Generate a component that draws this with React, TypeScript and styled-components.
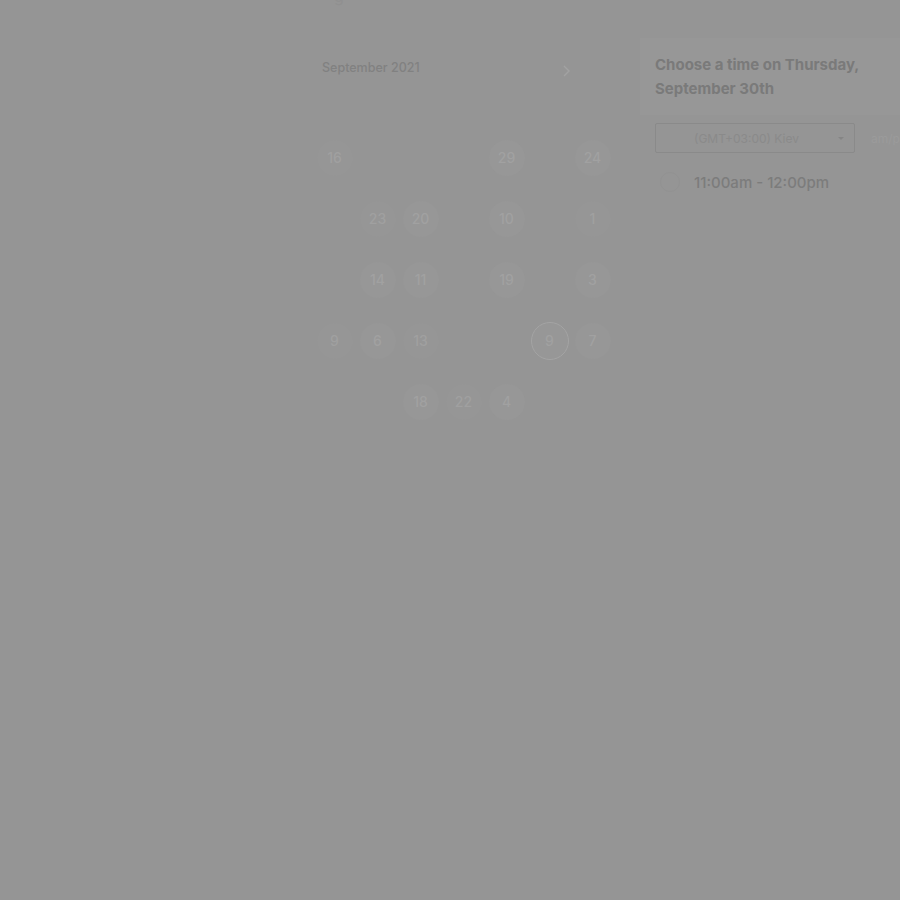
import React from "react";
import styled, { createGlobalStyle } from "styled-components";

const Global = createGlobalStyle`
  html, body { margin: 0; padding: 0; background: #959595; overflow: hidden; }
  body { font-family: Inter, Roboto, "Liberation Sans", Arial, sans-serif; }
`;

const Page = styled.div`
  width: 900px;
  height: 900px;
  overflow: hidden;
  display: flex;
  align-items: flex-start;
  background: #959595;
  position: relative;
`;

const ClippedTitle = styled.div`
  position: absolute;
  top: -14px;
  left: 334px;
  font-size: 16px;
  color: #909090;
`;

const Calendar = styled.section`
  margin-left: 313px;
  width: 301px;
  flex-shrink: 0;
  display: flex;
  flex-direction: column;
`;

const MonthBar = styled.div`
  display: flex;
  align-items: center;
  justify-content: space-between;
  height: 20px;
  margin-top: 57px;
  padding-left: 9px;
  padding-right: 42px;
`;

const MonthLabel = styled.span`
  font-size: 12.5px;
  font-weight: 500;
  color: #818181;
`;

const Chevron = styled.svg`
  width: 10px;
  height: 12px;
  margin-top: 8px;
`;

const Grid = styled.div`
  margin-top: 50px;
  display: grid;
  grid-template-columns: repeat(7, 43px);
  grid-auto-rows: 61px;
`;

const Cell = styled.div<{ $col: number; $row: number }>`
  grid-column: ${(p) => p.$col + 1};
  grid-row: ${(p) => p.$row + 1};
  display: flex;
  align-items: center;
  justify-content: center;
`;

const Day = styled.div<{ $selected?: boolean; $faint?: boolean }>`
  width: ${(p) => (p.$selected ? 38 : 36)}px;
  height: ${(p) => (p.$selected ? 38 : 36)}px;
  border-radius: 50%;
  box-sizing: border-box;
  display: flex;
  align-items: center;
  justify-content: center;
  font-size: 14px;
  font-weight: 500;
  background: ${(p) => (p.$faint ? "#969696" : "#979797")};
  border: ${(p) => (p.$selected ? "1px solid #a4a4a4" : "none")};
  color: ${(p) => (p.$faint ? "#a0a0a0" : "#a1a1a1")};
`;

const Panel = styled.section`
  margin-left: 26px;
  margin-top: 38px;
  width: 300px;
  flex-shrink: 0;
  display: flex;
  flex-direction: column;
`;

const HeaderCard = styled.div`
  background: #979797;
  padding: 15px 15px 14px;
`;

const Heading = styled.h2`
  margin: 0;
  font-size: 15px;
  line-height: 24px;
  font-weight: 700;
  color: #7a7a7a;
  width: 232px;
`;

const ZoneRow = styled.div`
  display: flex;
  align-items: center;
  gap: 16px;
  margin-top: 8px;
  padding-left: 15px;
`;

const Select = styled.div`
  width: 200px;
  height: 30px;
  box-sizing: border-box;
  border: 1px solid #8a8a8a;
  border-radius: 2px;
  display: flex;
  align-items: center;
  justify-content: space-between;
  padding: 0 10px 0 38px;
  font-size: 12px;
  color: #8a8a8a;
`;

const Caret = styled.span`
  width: 0;
  height: 0;
  border-left: 3px solid transparent;
  border-right: 3px solid transparent;
  border-top: 3px solid #858585;
`;

const Format = styled.span`
  font-size: 12px;
  color: #9b9b9b;
  white-space: nowrap;
`;

const SlotRow = styled.div`
  display: flex;
  align-items: center;
  gap: 14px;
  margin-top: 19px;
  padding-left: 20px;
`;

const Radio = styled.span`
  width: 20px;
  height: 20px;
  box-sizing: border-box;
  border-radius: 50%;
  border: 1px solid #929292;
`;

const SlotText = styled.span`
  font-size: 15px;
  font-weight: 500;
  color: #7c7c7c;
`;

type D = { c: number; r: number; n: number; sel?: boolean; faint?: boolean };
const days: D[] = [
  { c: 0, r: 0, n: 16, faint: true },
  { c: 4, r: 0, n: 29 },
  { c: 6, r: 0, n: 24 },
  { c: 1, r: 1, n: 23, faint: true },
  { c: 2, r: 1, n: 20 },
  { c: 4, r: 1, n: 10 },
  { c: 6, r: 1, n: 1, faint: true },
  { c: 1, r: 2, n: 14 },
  { c: 2, r: 2, n: 11 },
  { c: 4, r: 2, n: 19 },
  { c: 6, r: 2, n: 3 },
  { c: 0, r: 3, n: 9, faint: true },
  { c: 1, r: 3, n: 6 },
  { c: 2, r: 3, n: 13, faint: true },
  { c: 5, r: 3, n: 9, sel: true },
  { c: 6, r: 3, n: 7 },
  { c: 2, r: 4, n: 18 },
  { c: 3, r: 4, n: 22, faint: true },
  { c: 4, r: 4, n: 4 },
];

export default function App() {
  return (
    <Page>
      <Global />
      <ClippedTitle>g</ClippedTitle>
      <Calendar>
        <MonthBar>
          <MonthLabel>September 2021</MonthLabel>
          <Chevron viewBox="0 0 10 12">
            <path d="M2 1 L7 6 L2 11" fill="none" stroke="#a2a2a2" strokeWidth="1.4" />
          </Chevron>
        </MonthBar>
        <Grid>
          {days.map((d, i) => (
            <Cell key={i} $col={d.c} $row={d.r}>
              <Day $selected={d.sel} $faint={d.faint}>{d.n}</Day>
            </Cell>
          ))}
        </Grid>
      </Calendar>
      <Panel>
        <HeaderCard>
          <Heading>Choose a time on Thursday, September 30th</Heading>
        </HeaderCard>
        <ZoneRow>
          <Select>
            <span>(GMT+03:00) Kiev</span>
            <Caret />
          </Select>
          <Format>am/pm</Format>
        </ZoneRow>
        <SlotRow>
          <Radio />
          <SlotText>11:00am - 12:00pm</SlotText>
        </SlotRow>
      </Panel>
    </Page>
  );
}
